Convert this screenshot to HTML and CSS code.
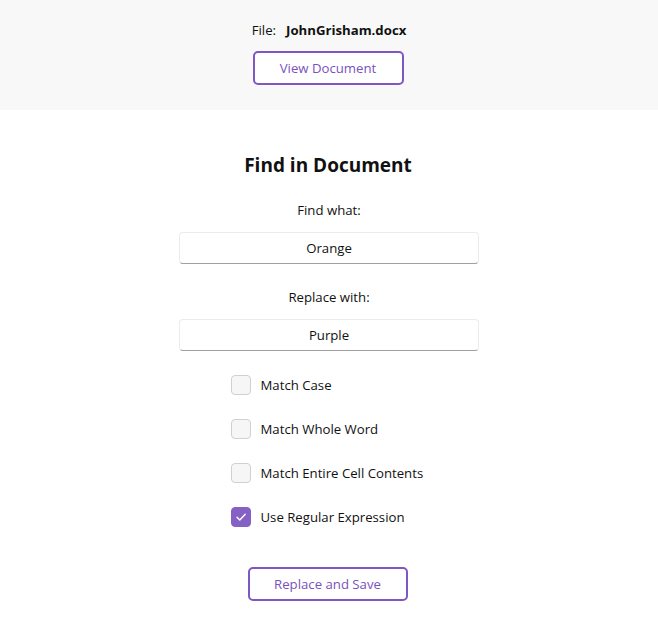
FILE: index.html
```html
<!DOCTYPE html>
<html>
<head>
<meta charset="utf-8">
<link rel="stylesheet" href="styles.css">
</head>
<body>
<header class="top">
  <div class="file-line"><span class="file-label">File:</span><span class="file-name">JohnGrisham.docx</span></div>
  <button class="btn btn-view">View Document</button>
</header>
<main class="panel">
  <h1 class="title">Find in Document</h1>
  <label class="field-label">Find what:</label>
  <div class="input">Orange</div>
  <label class="field-label second">Replace with:</label>
  <div class="input">Purple</div>
  <div class="checks">
    <div class="check"><span class="box"></span><span>Match Case</span></div>
    <div class="check"><span class="box"></span><span>Match Whole Word</span></div>
    <div class="check"><span class="box"></span><span>Match Entire Cell Contents</span></div>
    <div class="check"><span class="box on"><svg width="12" height="12" viewBox="0 0 12 12"><path d="M2 6.3 L4.8 9 L10.2 3.2" fill="none" stroke="#fff" stroke-width="1.4" stroke-linecap="round" stroke-linejoin="round"/></svg></span><span>Use Regular Expression</span></div>
  </div>
  <button class="btn btn-save">Replace and Save</button>
</main>
</body>
</html>
```
FILE: styles.css
```css
html, body { margin: 0; padding: 0; background: #fff; }
body {
  font-family: "Open Sans", "Noto Sans", sans-serif;
  font-size: 13.2px;
  color: #111;
}
.top {
  background: #f8f8f8;
  height: 110px;
  display: flex;
  flex-direction: column;
  align-items: center;
  box-sizing: border-box;
  padding-top: 20px;
}
.file-line { height: 20px; line-height: 20px; }
.file-label { margin-right: 10px; }
.file-name { font-weight: 700; }
.btn {
  font-family: inherit;
  font-size: 13.2px;
  color: #7a52bd;
  background: #fff;
  border: 2px solid #7d58c0;
  border-radius: 5px;
  height: 34px;
  padding: 0;
  box-sizing: border-box;
}
.btn-view { width: 151px; margin-top: 11px; margin-left: -2px; }
.panel {
  display: flex;
  flex-direction: column;
  align-items: center;
  padding-top: 43px;
}
.title {
  margin: 0;
  font-size: 19px;
  font-weight: 700;
  line-height: 24px;
  height: 24px;
  margin-left: -2px;
}
.field-label { margin-top: 23px; line-height: 20px; height: 20px; }
.field-label.second { margin-top: 23px; }
.input {
  margin-top: 12px;
  width: 300px;
  height: 32px;
  box-sizing: border-box;
  border: 1px solid #ececec;
  border-bottom-color: #a0a0a0;
  border-radius: 4px;
  background: #fff;
  text-align: center;
  line-height: 30px;
}
.checks {
  margin-top: 24px;
  display: flex;
  flex-direction: column;
  gap: 24px;
  width: 196px;
  margin-left: -1px;
}
.check {
  display: flex;
  align-items: center;
  gap: 10px;
  height: 20px;
}
.box {
  width: 20px;
  height: 20px;
  box-sizing: border-box;
  border: 1px solid #d0d0d0;
  border-radius: 4px;
  background: #f6f6f6;
  display: flex;
  align-items: center;
  justify-content: center;
}
.box.on { background: #8661c5; border-color: #8661c5; }
.btn-save { width: 160px; margin-top: 40px; margin-left: -3px; }
```
